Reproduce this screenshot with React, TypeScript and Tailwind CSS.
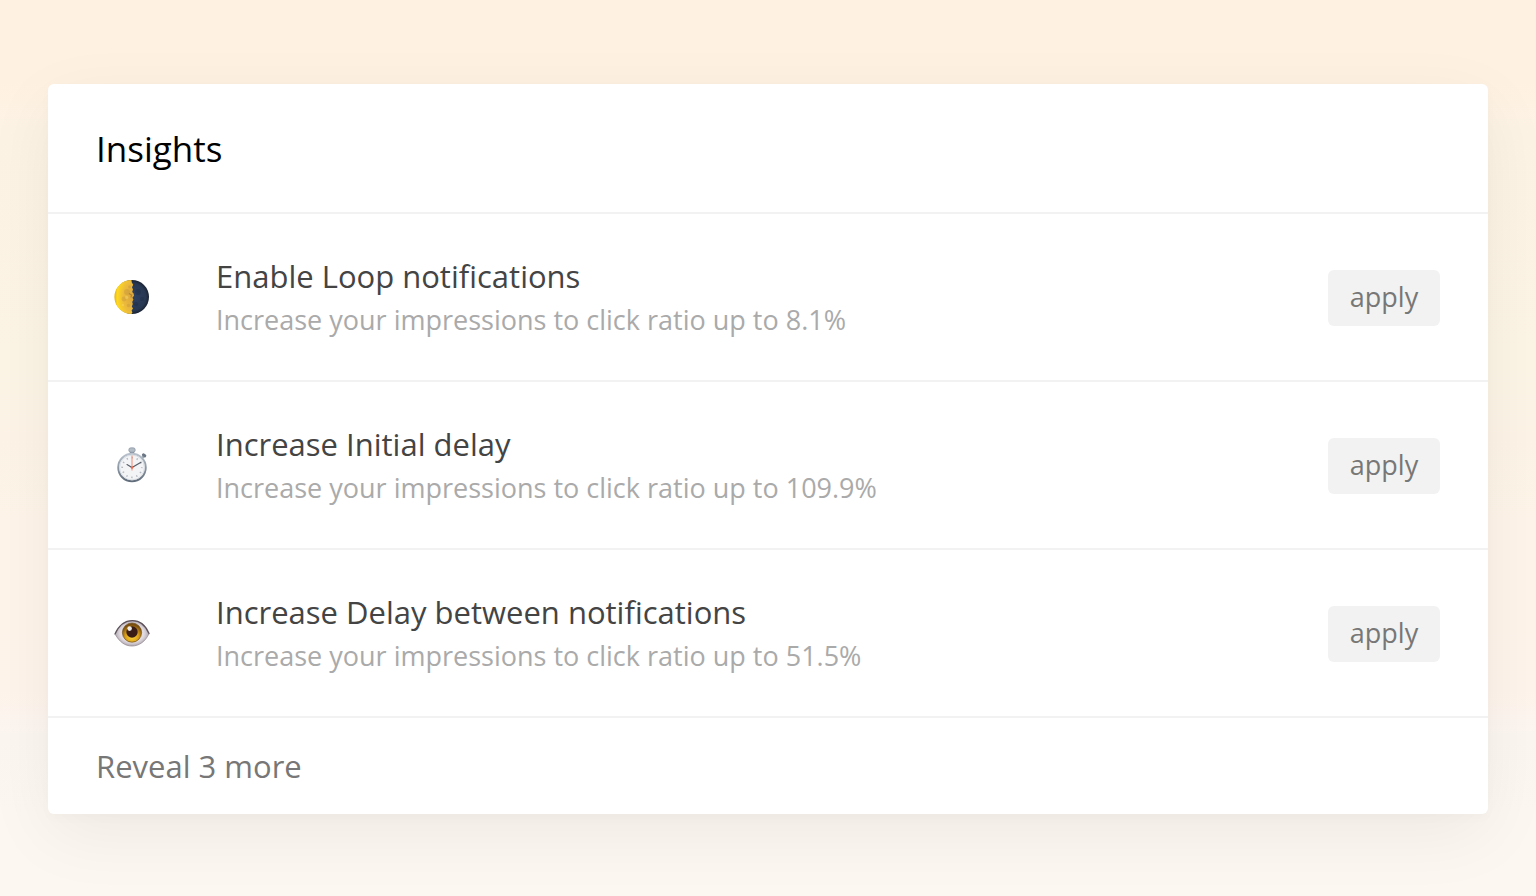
import type { ReactNode } from 'react'

type Insight = {
  id: string
  title: string
  gain: string
  icon: ReactNode
}

function MoonIcon() {
  return (
    <svg viewBox="0 0 36 36" className="size-9" aria-hidden="true">
      <defs>
        <radialGradient id="moon-lit" cx="0.9" cy="0.5" r="0.9">
          <stop offset="0" stopColor="#dba63c" />
          <stop offset="0.5" stopColor="#ecbb3c" />
          <stop offset="0.85" stopColor="#ffd91f" />
          <stop offset="1" stopColor="#e3b010" />
        </radialGradient>
        <radialGradient id="moon-dark" cx="0.5" cy="0.5" r="0.5">
          <stop offset="0" stopColor="#2f4263" />
          <stop offset="0.8" stopColor="#273853" />
          <stop offset="1" stopColor="#1a2232" />
        </radialGradient>
      </defs>
      <circle cx="18" cy="18" r="17" fill="url(#moon-dark)" />
      <path d="M17.4 1A17 17 0 0 0 17.4 35l1-1.5-.8-2 1.4-2-1.2-2 1-2.5-.6-2 1.2-2.4-1-1.8 1.6-2-.4-2.2-1.4-1.6.8-2.6-1-2.2 1.2-2.4-1.4-2.2z" fill="url(#moon-lit)" />
      <g fill="#b98a3e" opacity="0.3">
        <circle cx="13" cy="13" r="3" />
        <circle cx="10" cy="20" r="2.4" />
        <circle cx="14.5" cy="26.5" r="1.7" />
        <circle cx="15.5" cy="8" r="1.4" />
      </g>
      <path d="M15 14.5l2.5 1.5-.5 2.5" fill="none" stroke="#9a7436" strokeWidth="1.2" opacity="0.7" />
      <g fill="#ffe783" opacity="0.35">
        <circle cx="12.6" cy="18.4" r="1.6" />
        <circle cx="9" cy="26" r="1.1" />
      </g>
      <g fill="#192840" opacity="0.3">
        <circle cx="24" cy="13" r="3" />
        <circle cx="28" cy="20" r="2" />
        <circle cx="22" cy="25" r="2.2" />
      </g>
    </svg>
  )
}

function StopwatchIcon() {
  return (
    <svg viewBox="0 0 36 36" className="size-9" aria-hidden="true">
      <defs>
        <linearGradient id="watch-rim" x1="0" y1="0" x2="0" y2="1">
          <stop offset="0" stopColor="#b9c2cc" />
          <stop offset="0.5" stopColor="#8d98a6" />
          <stop offset="1" stopColor="#626d7b" />
        </linearGradient>
      </defs>
      <rect x="15.8" y="3" width="4.4" height="4" fill="#8390a0" />
      <rect x="14.8" y="0.8" width="6.4" height="4.4" rx="2" fill="#b3bcc6" stroke="#7b8794" strokeWidth="0.6" />
      <path d="M27.5 11.5l2-2" stroke="#8d98a4" strokeWidth="2" />
      <rect x="27.8" y="6.8" width="4.6" height="3" rx="1.2" transform="rotate(38 30 8.3)" fill="#6b7684" />
      <circle cx="18" cy="20.5" r="13.8" fill="#f3f4f6" stroke="url(#watch-rim)" strokeWidth="1.9" />
      <circle cx="18" cy="20.5" r="12.4" fill="none" stroke="#d3d9df" strokeWidth="0.8" />
      <circle cx="18" cy="20.5" r="9.8" fill="none" stroke="#b4b9c0" strokeWidth="1.7" strokeDasharray="1.3 3.83" strokeDashoffset="0.65" />
      <path d="M13 17.6l5 2.9 9-5.3" fill="none" stroke="#565d66" strokeWidth="1.1" strokeLinecap="round" />
      <path d="M18 8.5v15" stroke="#f58a72" strokeWidth="1" />
      <circle cx="18" cy="20.5" r="1.2" fill="#e86a50" />
    </svg>
  )
}

function EyeIcon() {
  return (
    <svg viewBox="0 0 36 36" className="size-9" aria-hidden="true">
      <defs>
        <radialGradient id="eye-white" cx="0.5" cy="0.5" r="0.55">
          <stop offset="0" stopColor="#ffffff" />
          <stop offset="0.65" stopColor="#dfd9df" />
          <stop offset="1" stopColor="#9d949f" />
        </radialGradient>
        <radialGradient id="eye-iris" cx="0.5" cy="0.7" r="0.6">
          <stop offset="0" stopColor="#ffdd39" />
          <stop offset="0.55" stopColor="#dba01a" />
          <stop offset="1" stopColor="#7a4e0e" />
        </radialGradient>
      </defs>
      <path d="M1 19C5 10 10.5 5.6 18.4 5.6S31.5 10 35 18.6C31.5 26.5 25 31 18 31S5.5 27 1 19z" fill="url(#eye-white)" />
      <path d="M1 19C5 10 10.5 5.6 18.4 5.6S31.5 10 35 18.6" fill="none" stroke="#5d5259" strokeWidth="1.3" strokeLinecap="round" />
      <path d="M1 19C5.5 27 11 31 18 31S31.5 26.5 35 18.6" fill="none" stroke="#968b92" strokeWidth="0.8" />
      <circle cx="18" cy="17.6" r="9.6" fill="url(#eye-iris)" stroke="#70501c" strokeWidth="0.7" />
      <circle cx="18" cy="17" r="5.7" fill="#3a1d15" />
      <circle cx="15.6" cy="13.6" r="2.3" fill="#ffffff" opacity="0.9" />
    </svg>
  )
}

const insights: Insight[] = [
  { id: 'loop', title: 'Enable Loop notifications', gain: '8.1%', icon: <MoonIcon /> },
  { id: 'initial-delay', title: 'Increase Initial delay', gain: '109.9%', icon: <StopwatchIcon /> },
  { id: 'delay-between', title: 'Increase Delay between notifications', gain: '51.5%', icon: <EyeIcon /> },
]

function InsightRow({ insight }: { insight: Insight }) {
  return (
    <li className="flex items-center border-t-2 border-[#f2f2f2] px-12 pt-[41px] pb-[39px]">
      <div className="mr-12 flex w-18 shrink-0 justify-center pb-0.5">{insight.icon}</div>
      <div className="min-w-0 flex-1">
        <h2 id={insight.id} className="text-[31px] leading-[43px] text-[#444444]">{insight.title}</h2>
        <p className="text-[27px] leading-[43px] text-[#aaaaaa]">
          Increase your impressions to click ratio up to {insight.gain}
        </p>
      </div>
      <button
        type="button"
        aria-describedby={insight.id}
        className="flex h-14 w-28 shrink-0 items-center justify-center rounded-md bg-[#f2f2f2] pb-0.5 text-[27px] leading-8 text-[#777777]"
      >
        apply
      </button>
    </li>
  )
}

export default function App() {
  return (
    <main className="min-h-screen bg-[linear-gradient(to_bottom,#fff1e2_0%,#fff1e2_9%,#fdf3e4_14%,#fcf4e5_40%,#fef4e9_58%,#fff4eb_77%,#fcf6f1_82%,#fcf8f1_100%)] px-12 pt-[84px] pb-20 font-['Open_Sans',sans-serif]">
      <section className="rounded-md bg-white shadow-[0_4px_12px_rgba(0,0,0,0.02),0_20px_70px_rgba(0,0,0,0.06)]">
        <h1 className="px-12 pt-[41px] pb-[39px] text-[35px] leading-12 text-black">Insights</h1>
        <ul>
          {insights.map((insight) => (
            <InsightRow key={insight.id} insight={insight} />
          ))}
        </ul>
        <div className="border-t-2 border-[#f2f2f2] px-12 py-6">
          <button type="button" className="block text-[31px] leading-12 text-[#777777]">
            Reveal 3 more
          </button>
        </div>
      </section>
    </main>
  )
}
